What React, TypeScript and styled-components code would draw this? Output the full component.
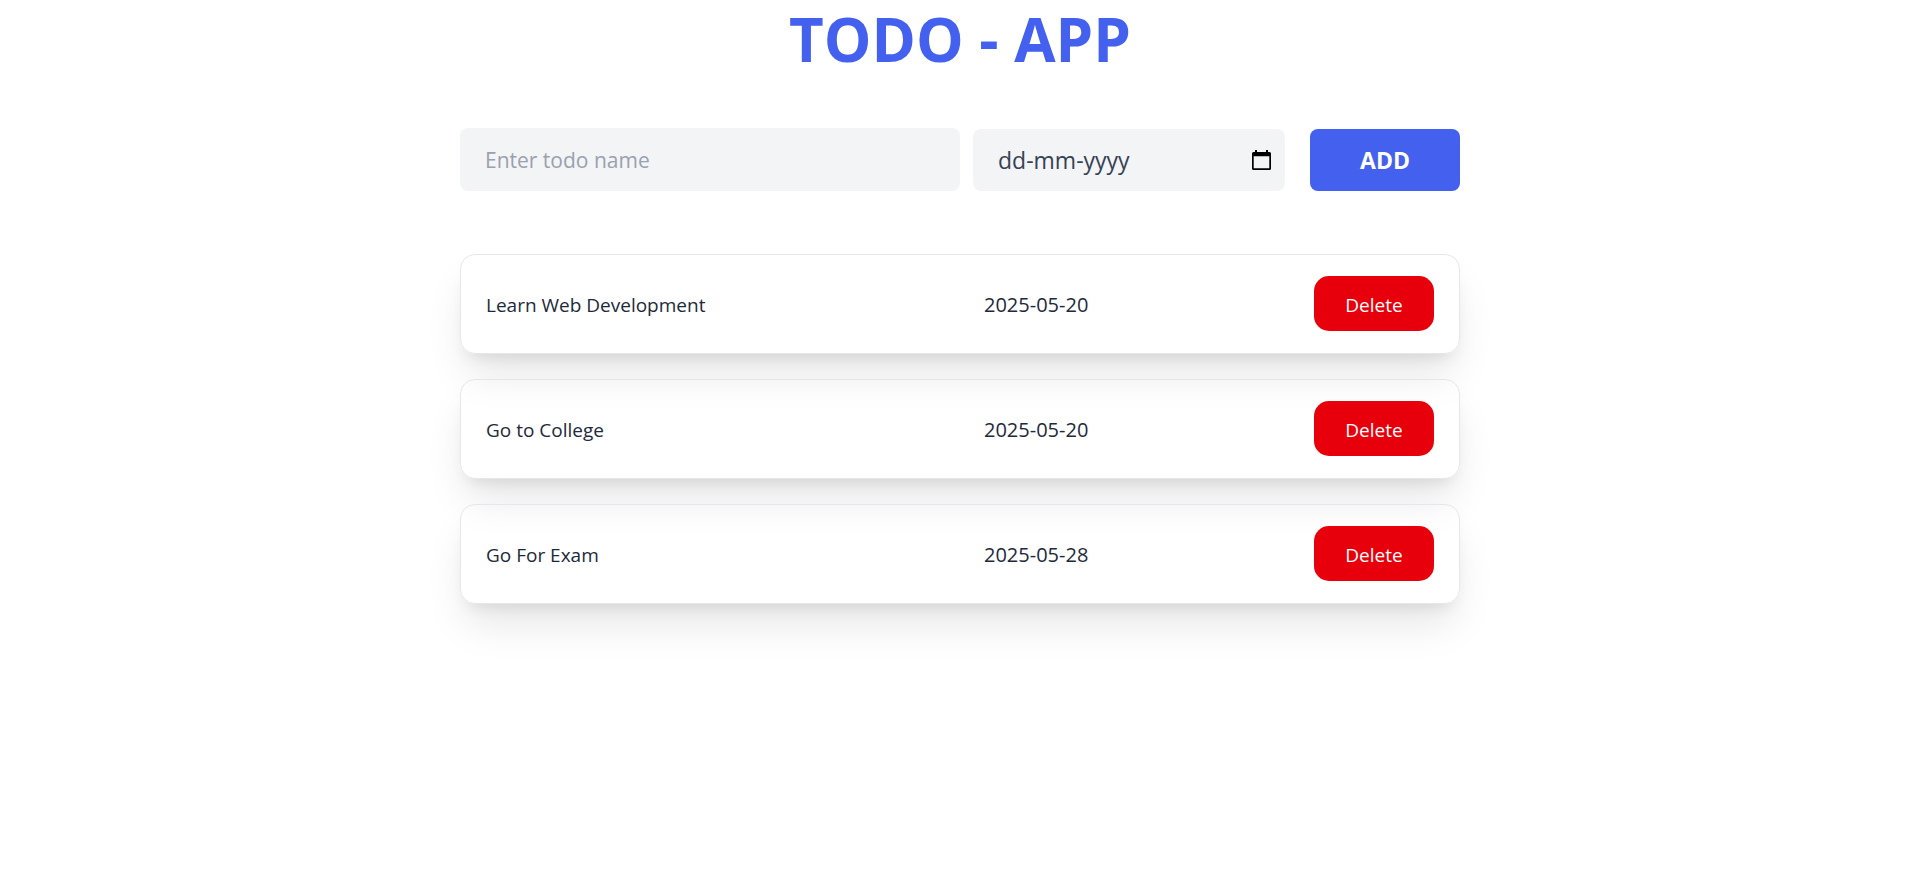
import React, { useState } from 'react';
import styled, { createGlobalStyle } from 'styled-components';

const GlobalStyle = createGlobalStyle`
  *, *::before, *::after { box-sizing: border-box; }
  body {
    margin: 0;
    background: #fff;
    color: #1e293b;
    font-family: 'Segoe UI', 'Open Sans', 'Noto Sans', sans-serif;
    font-size: 19px;
    line-height: 30px;
  }
  button, input { font: inherit; color: inherit; border: 0; margin: 0; }
  button { cursor: pointer; }
`;

const Page = styled.main`
  display: flex;
  flex-direction: column;
  align-items: center;
  padding: 9px 20px 80px;
`;

const Title = styled.h1`
  margin: 0;
  font-size: 60px;
  line-height: 60px;
  font-weight: 700;
  color: #4361ee;
`;

const Form = styled.form`
  display: flex;
  align-items: flex-end;
  width: 100%;
  max-width: 1000px;
  margin-top: 59px;
`;

const NameInput = styled.input`
  width: 50%;
  height: 63px;
  padding: 0 25px;
  border-radius: 8px;
  background: #f3f4f6;
  font-size: 21px;
  &::placeholder { color: #99a1af; opacity: 1; }
`;

const DateField = styled.div`
  flex: 1;
  min-width: 0;
  display: flex;
  align-items: center;
  height: 62px;
  margin: 0 25px 0 13px;
  padding: 0 12px 0 25px;
  border-radius: 8px;
  background: #f3f4f6;
`;

const DateInput = styled.input`
  flex: 1;
  min-width: 0;
  padding: 0;
  background: none;
  color: #364153;
  font-size: 23px;
  &::placeholder { color: #364153; opacity: 1; }
`;

const CalendarButton = styled.button`
  display: flex;
  padding: 0;
  background: none;
`;

const AddButton = styled.button`
  width: 150px;
  height: 62px;
  border-radius: 8px;
  background: #4361ee;
  color: #fff;
  font-size: 23px;
  font-weight: 700;
`;

const List = styled.ul`
  display: flex;
  flex-direction: column;
  gap: 25px;
  width: 100%;
  max-width: 1000px;
  margin: 63px 0 0;
  padding: 0;
  list-style: none;
`;

const Card = styled.li`
  display: grid;
  grid-template-columns: 498fr 330fr 120px;
  align-items: center;
  height: 100px;
  padding: 0 25px;
  border: 1px solid #e5e7eb;
  border-radius: 15px;
  box-shadow: 0 25px 40px -6px rgba(0, 0, 0, 0.1), 0 10px 16px -8px rgba(0, 0, 0, 0.1);
`;

const TodoName = styled.span`
  padding-top: 2px;
`;

const TodoDate = styled.time`
  padding-top: 2px;
  font-size: 20px;
`;

const DeleteButton = styled.button`
  height: 55px;
  margin-bottom: 2px;
  padding: 3px 0 0;
  border-radius: 15px;
  background: #e7000b;
  color: #fff;
`;

const initialTodos = [
  { id: 1, name: 'Learn Web Development', date: '2025-05-20' },
  { id: 2, name: 'Go to College', date: '2025-05-20' },
  { id: 3, name: 'Go For Exam', date: '2025-05-28' },
];

export default function App() {
  const [todos, setTodos] = useState(initialTodos);
  const [name, setName] = useState('');
  const [date, setDate] = useState('');

  const addTodo = (event: React.FormEvent) => {
    event.preventDefault();
    if (!name || !date) return;
    setTodos([...todos, { id: Date.now(), name, date: date.split('-').reverse().join('-') }]);
    setName('');
    setDate('');
  };

  return (
    <>
      <GlobalStyle />
      <Page>
        <Title>TODO - APP</Title>
        <Form onSubmit={addTodo}>
          <NameInput
            type="text"
            aria-label="Todo name"
            placeholder="Enter todo name"
            value={name}
            onChange={(e) => setName(e.target.value)}
          />
          <DateField>
            <DateInput
              type="text"
              aria-label="Due date"
              placeholder="dd-mm-yyyy"
              value={date}
              onChange={(e) => setDate(e.target.value)}
            />
            <CalendarButton type="button" aria-label="Choose date">
              <svg width="23" height="23" viewBox="0 0 23 23" aria-hidden="true">
                <path
                  fillRule="evenodd"
                  d="M5 1h2v2h9V1h2v2h1.500a1.500 1.500 0 0 1 1.500 1.500v15a1.500 1.500 0 0 1-1.500 1.500h-16A1.500 1.500 0 0 1 2 19.500v-15A1.500 1.500 0 0 1 3.500 3H5zM3.700 7.300v12h15.600v-12z"
                />
              </svg>
            </CalendarButton>
          </DateField>
          <AddButton type="submit">ADD</AddButton>
        </Form>
        <List>
          {todos.map((todo) => (
            <Card key={todo.id}>
              <TodoName>{todo.name}</TodoName>
              <TodoDate dateTime={todo.date}>{todo.date}</TodoDate>
              <DeleteButton
                type="button"
                onClick={() => setTodos(todos.filter((item) => item.id !== todo.id))}
              >
                Delete
              </DeleteButton>
            </Card>
          ))}
        </List>
      </Page>
    </>
  );
}
